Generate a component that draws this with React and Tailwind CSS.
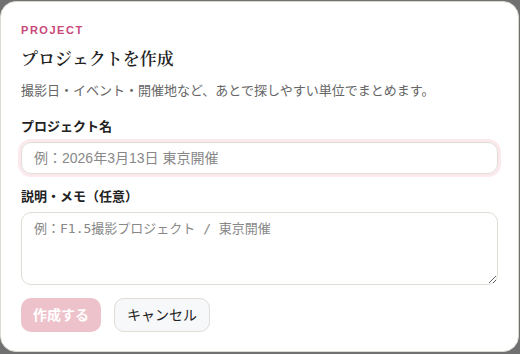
import React from 'react';

export default function App() {
  return (
    <div className="w-[520px] h-[354px] bg-[#707070] pt-[1px] pb-[2px] pr-[1px]">
      <div
        className="h-full rounded-2xl bg-white border border-[#dcd9d3] px-5 pt-[20px] flex flex-col"
        style={{ fontFamily: '"Liberation Sans", "Noto Sans CJK JP", sans-serif' }}
      >
        <div className="text-[11px] font-bold tracking-[0.14em] text-[#c8487a] leading-4">PROJECT</div>
        <h1
          className="mt-[10px] text-[17px] font-semibold leading-6 text-[#222]"
          style={{ fontFamily: '"Liberation Serif", "Noto Serif CJK JP", serif' }}
        >
          プロジェクトを作成
        </h1>
        <p className="mt-[9px] text-[13px] leading-5 text-[#666]">
          撮影日・イベント・開催地など、あとで探しやすい単位でまとめます。
        </p>

        <label className="mt-[16px] text-[13px] font-bold leading-5 text-[#222]">プロジェクト名</label>
        <input
          placeholder="例：2026年3月13日 東京開催"
          className="mt-[5px] h-[32px] w-full rounded-[10px] border border-[#e0dcd6] ring-[3px] ring-[#fce9ee] px-3 text-[14px] text-[#333] placeholder:text-[#888] outline-none"
        />

        <label className="mt-[13px] text-[13px] font-bold leading-5 text-[#222]">説明・メモ（任意）</label>
        <textarea
          placeholder="例：F1.5撮影プロジェクト / 東京開催"
          className="mt-[5px] h-[73px] w-full rounded-[10px] border border-[#e0dcd6] px-3 py-[6px] text-[13px] leading-5 text-[#333] placeholder:text-[#888] outline-none"
          style={{ fontFamily: '"DejaVu Sans Mono", "Noto Sans CJK JP", monospace' }}
        />

        <div className="mt-[13px] flex gap-[13px]">
          <button className="h-[34px] px-3 rounded-[10px] bg-[#eec2cb] text-white text-[14px] font-bold">
            作成する
          </button>
          <button className="h-[34px] px-3 rounded-[10px] bg-[#f7f8fa] border border-[#e0dcd6] text-[#222] text-[14px]">
            キャンセル
          </button>
        </div>
      </div>
    </div>
  );
}
